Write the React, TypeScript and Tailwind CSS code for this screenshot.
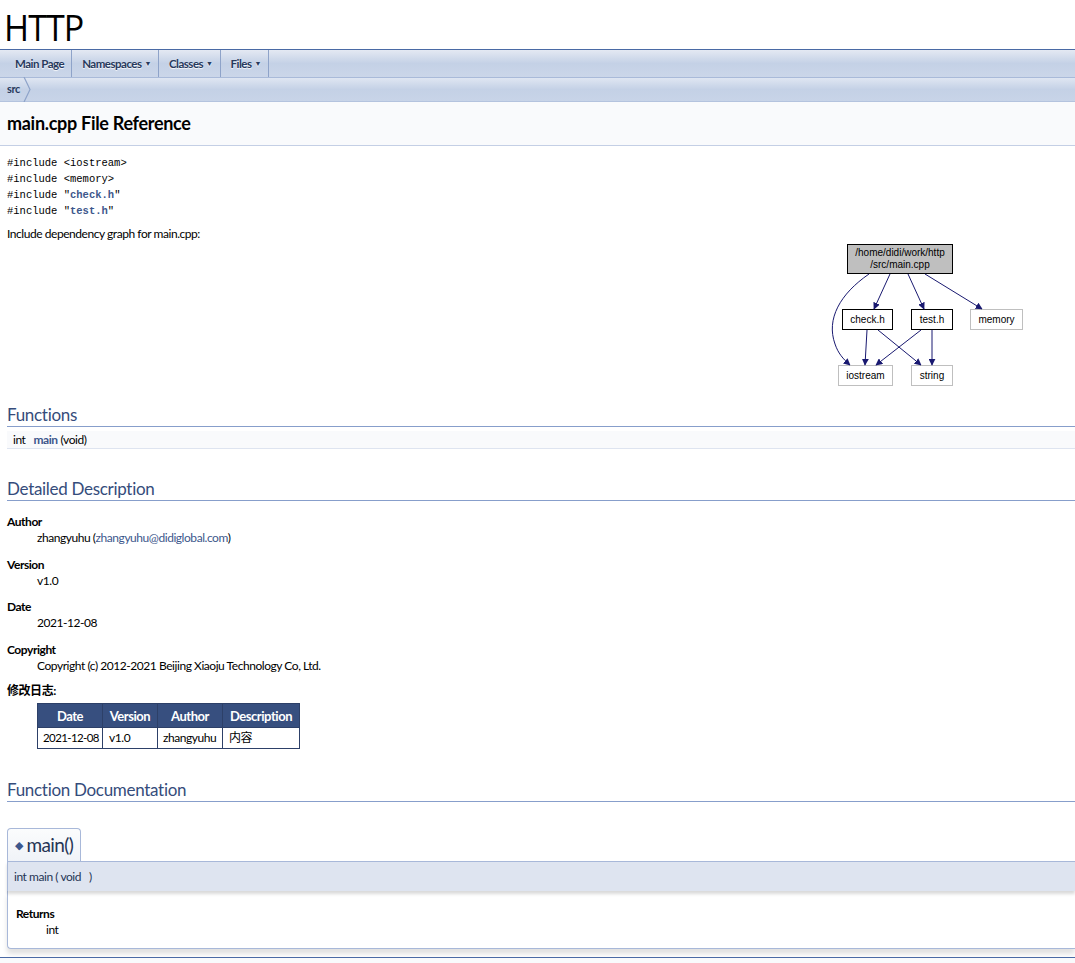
import React from "react"

const sans = "font-['Lato','Liberation_Sans',sans-serif]"
const mono = "font-['Liberation_Mono',monospace]"

function NavItem({ label, arrow, first }: { label: string; arrow?: boolean; first?: boolean }) {
  return (
    <div
      className={`flex items-center ${first ? "pl-[15px] pr-[7px]" : "pl-[10px] pr-[7px]"} h-full border-r border-[#8ea3c9] text-[11.5px] tracking-[-0.5px] font-bold text-[#283a5d] [text-shadow:0_1px_1px_rgba(255,255,255,0.9)]`}
    >
      {label}
      {arrow && <span className="ml-[3px] text-[7px] text-[#283a5d]">▼</span>}
    </div>
  )
}

function SectionHeading({ title }: { title: string }) {
  return (
    <div className="ml-[7px] border-b border-[#879ecb] text-[17px] tracking-[-0.3px] text-[#354c7b] leading-[20px] pb-[1px]">
      {title}
    </div>
  )
}

function DepGraph() {
  const edge = "#191970"
  return (
    <svg width="200" height="148" viewBox="830 242 200 148" className="block">
      <defs>
        <marker id="arr" viewBox="0 0 10 10" refX="9" refY="5" markerWidth="7" markerHeight="7" orient="auto">
          <path d="M0,0 L10,5 L0,10 z" fill={edge} />
        </marker>
      </defs>
      <g fontFamily="Liberation Sans, Arial, sans-serif" fontSize="10" letterSpacing="0">
        <rect x="847.5" y="245.5" width="105" height="29" fill="#bfbfbf" stroke="#000" />
        <text x="900" y="257" textAnchor="middle">/home/didi/work/http</text>
        <text x="900" y="269" textAnchor="middle">/src/main.cpp</text>

        <rect x="842.5" y="310.5" width="50" height="20" fill="#fff" stroke="#000" />
        <text x="867.5" y="324" textAnchor="middle">check.h</text>
        <rect x="911.5" y="310.5" width="41" height="20" fill="#fff" stroke="#000" />
        <text x="932" y="324" textAnchor="middle">test.h</text>
        <rect x="970.5" y="310.5" width="52" height="20" fill="#fff" stroke="#bfbfbf" />
        <text x="996.5" y="324" textAnchor="middle">memory</text>
        <rect x="838.5" y="366.5" width="54" height="20" fill="#fff" stroke="#bfbfbf" />
        <text x="865.5" y="380" textAnchor="middle">iostream</text>
        <rect x="911.5" y="366.5" width="41" height="20" fill="#fff" stroke="#bfbfbf" />
        <text x="932" y="380" textAnchor="middle">string</text>
      </g>
      <g stroke={edge} strokeWidth="1" fill="none" markerEnd="url(#arr)">
        <path d="M869,275 C840,295 826,320 835,345 C838,354 843,360 850,366" />
        <path d="M890,275 L874,310" />
        <path d="M908,275 L924,310" />
        <path d="M925,275 L982,310" />
        <path d="M867,331 L865,366" />
        <path d="M878,331 L921,366" />
        <path d="M921,331 L876,366" />
        <path d="M932,331 L932,366" />
      </g>
    </svg>
  )
}

export default function App() {
  const cell = "border border-[#2d4068]"
  return (
    <div className={`${sans} bg-white text-black min-h-[963px] overflow-hidden tracking-[-0.45px]`}>
      {/* project title */}
      <div className="h-[49px] flex items-center pl-[4px] pt-[4px]">
        <span className="text-[37px] leading-none font-['Open_Sans',sans-serif] tracking-[-1px] scale-x-[0.92] origin-left inline-block">HTTP</span>
      </div>

      {/* main nav */}
      <div className="h-[28px] border-t border-[#4a6aa5] flex bg-linear-to-b from-[#e4e9f3] via-[#c4d1e6] to-[#cbd6e9]">
        <NavItem label="Main Page" first />
        <NavItem label="Namespaces" arrow />
        <NavItem label="Classes" arrow />
        <NavItem label="Files" arrow />
      </div>

      {/* breadcrumb */}
      <div className="h-[25px] border-t border-[#a9bad9] border-b border-b-[#b4c3de] flex items-center bg-linear-to-b from-[#dfe6f2] via-[#c4d1e6] to-[#c8d4e8]">
        <span className="pl-[7px] text-[11px] font-bold text-[#283a5d]">src</span>
        <svg width="10" height="25" viewBox="0 0 10 25" className="ml-[3px]">
          <path d="M1,0 L7,12.5 L1,25" stroke="#8ea3c9" strokeWidth="1.2" fill="none" />
        </svg>
      </div>

      {/* header */}
      <div className="h-[44px] bg-[#f9fafc] border-b border-[#c4cfe5] flex items-center pl-[7px]">
        <span className="text-[18px] font-bold tracking-[-0.3px]">main.cpp File Reference</span>
      </div>

      {/* contents */}
      <div className="pt-[9px]">
        <div className={`${mono} text-[10.5px] leading-[16px] pl-[7px] tracking-normal`}>
          <div>#include &lt;iostream&gt;</div>
          <div>#include &lt;memory&gt;</div>
          <div>#include "<span className="text-[#3d578c] font-bold">check.h</span>"</div>
          <div>#include "<span className="text-[#3d578c] font-bold">test.h</span>"</div>
        </div>
        <div className="pl-[7px] pt-[7px] text-[12px] leading-[16px]">Include dependency graph for main.cpp:</div>
        <div className="flex justify-end pr-[45px] mt-[-1px]">
          <DepGraph />
        </div>

        <div className="mt-[16px]">
          <SectionHeading title="Functions" />
          <div className="ml-[7px] mt-[4px] h-[18px] bg-[#f9fafc] border-b border-[#dee4f0] flex items-center text-[12px] pl-[6px]">
            <span>int</span>
            <span className="ml-[8px] font-bold text-[#3d578c]">main</span>
            <span className="ml-[3px]">(void)</span>
          </div>
        </div>

        <div className="mt-[30px]">
          <SectionHeading title="Detailed Description" />
        </div>

        <div className="pl-[7px] pt-[13px] text-[12px] leading-[16px]">
          <div className="font-bold">Author</div>
          <div className="pl-[30px]">
            zhangyuhu (<span className="text-[#3d578c]">zhangyuhu@didiglobal.com</span>)
          </div>
          <div className="font-bold mt-[11px]">Version</div>
          <div className="pl-[30px]">v1.0</div>
          <div className="font-bold mt-[10px]">Date</div>
          <div className="pl-[30px]">2021-12-08</div>
          <div className="font-bold mt-[11px]">Copyright</div>
          <div className="pl-[30px]">Copyright (c) 2012-2021 Beijing Xiaoju Technology Co, Ltd.</div>
          <div className="font-bold mt-[9px] font-['Lato','Noto_Sans_CJK_SC',sans-serif]">修改日志:</div>
          <table className="ml-[30px] mt-[4px] border-collapse table-fixed w-[262px] text-[12px] font-['Lato','Noto_Sans_CJK_SC',sans-serif] whitespace-nowrap">
            <colgroup>
              <col className="w-[65px]" />
              <col className="w-[55px]" />
              <col className="w-[65px]" />
              <col className="w-[77px]" />
            </colgroup>
            <thead>
              <tr className="bg-[#374f7f] text-white">
                <th className={`${cell} h-[24px] font-bold text-[13px]`}>Date</th>
                <th className={`${cell} font-bold text-[13px]`}>Version</th>
                <th className={`${cell} font-bold text-[13px]`}>Author</th>
                <th className={`${cell} font-bold text-[13px]`}>Description</th>
              </tr>
            </thead>
            <tbody>
              <tr>
                <td className={`${cell} h-[21px] pl-[5px] pr-0 text-[11.5px] tracking-[-0.6px]`}>2021-12-08</td>
                <td className={`${cell} px-[6px]`}>v1.0</td>
                <td className={`${cell} px-[5px]`}>zhangyuhu</td>
                <td className={`${cell} px-[6px]`}>内容</td>
              </tr>
            </tbody>
          </table>
        </div>

        <div className="mt-[31px]">
          <SectionHeading title="Function Documentation" />
        </div>

        {/* member doc */}
        <div className="mt-[26px] ml-[7px]">
          <div className="inline-flex items-center h-[33px] pl-[7px] pr-[7px] border border-[#a8b8d9] border-b-0 rounded-t-[4px] bg-linear-to-b from-[#fbfcfd] to-[#f0f3f8] text-[19px] tracking-[-0.6px] text-[#253555]">
            <span className="text-[11px] text-[#3d578c] mr-[4px]">◆</span>
            main()
          </div>
          <div className="h-[30px] bg-[#dee4f0] border-t border-l border-[#a8b8d9] flex items-center pl-[6px] text-[12px] text-[#253555] shadow-[0_3px_3px_rgba(0,0,0,0.15)] relative">
            int main ( void&nbsp;&nbsp;&nbsp;)
          </div>
          <div className="h-[58px] bg-white border-l border-b border-[#a8b8d9] rounded-bl-[4px] shadow-[0_5px_5px_rgba(0,0,0,0.12)] pt-[15px] pl-[8px] text-[12px] leading-[16px]">
            <div className="font-bold">Returns</div>
            <div className="pl-[30px]">int</div>
          </div>
        </div>

        <div className="mt-[8px] border-t border-[#4a6aa5] h-[20px] bg-[#f9fafc]" />
      </div>
    </div>
  )
}
